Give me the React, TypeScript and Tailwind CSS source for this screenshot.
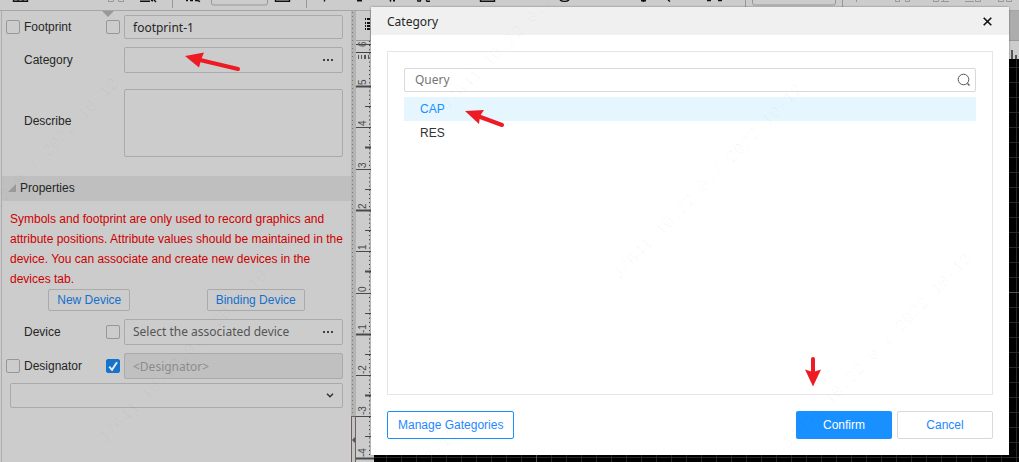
import { useState } from 'react';

const SANS = "font-['Liberation_Sans',Arial,sans-serif]";
const HUMANIST = "font-['Noto_Sans',sans-serif]";

const rulerMarks = [5, 4, 3, 2, 1, 0, -1, -2, -3, -4];
const categories = ['CAP', 'RES'];

const watermarks = [
  [-65, 275],
  [105, 445],
  [275, 625],
  [447, 112],
  [619, 281],
  [788, 450],
];

const Check = ({
  id,
  label,
  checked = false,
}: {
  id: string;
  label: string;
  checked?: boolean;
}) => {
  const [on, setOn] = useState(checked);
  return (
    <span className="relative block size-3.5 shrink-0">
      <input
        id={id}
        type="checkbox"
        aria-label={label}
        checked={on}
        onChange={(e) => setOn(e.target.checked)}
        className="block size-3.5 appearance-none rounded-xs border border-[#979797] checked:border-[#1474cc] checked:bg-[#1474cc]"
      />
      {on && (
        <svg
          viewBox="0 0 14 14"
          className="pointer-events-none absolute inset-0 size-3.5"
          fill="none"
          stroke="#e6e6e6"
          strokeWidth="2"
        >
          <path d="M3.2 7.6 6 10.8 11 3.2" />
        </svg>
      )}
    </span>
  );
};

const MoreButton = ({ label }: { label: string }) => (
  <button type="button" aria-label={label} className="flex h-full w-7 items-center justify-center">
    <svg width="10" height="2" viewBox="0 0 10 2" fill="#3c4048">
      <path d="M0 0h2v2H0zM4 0h2v2H4zM8 0h2v2H8z" />
    </svg>
  </button>
);

const Toolbar = () => (
  <div className="h-[11px] shrink-0 overflow-hidden border-b border-[#a6a6a6] bg-[#cccccc]">
    <svg width="1019" height="10" viewBox="0 0 1019 10" fill="none">
      <g stroke="#111" strokeWidth="1.4">
        <path d="M13.5 0v1.2h14V0M18 0v1M23 0v1" />
        <path d="M140 1.2h10M151 0l2 1M154 0l2 2" />
        <path d="M186 .6h2M190 .6h3M195 .6h3l2 1" />
        <path d="M275.5 0v1.2h14V0M480.5 0v1.2h14V0" />
        <path d="M324.5 0v1.5M357 .8h5M390 0l1 1.5M395 .7h-2M417 .8l3 .4 1-1M426 .3l1 1h3" />
        <path d="M560 0c2 1.8 7 1.8 9 0M641 .8h5M643.500 0v2M668 0l2 1.500M707 .6h4M718 .6h4" />
      </g>
      <g stroke="#979797">
        <path d="M108.500 0v1.500h5V0M118.500 0v1.500h5V0" />
        <path d="M211.500 0v3q0 2 2 2h52q2 0 2-2V0M752.500 0v3q0 2 2 2h79q2 0 2-2V0" />
        <path d="M172.500 0v8M306.500 0v8M745.500 0v7M842.500 0v7" />
        <path d="M856.500 0v2M895.500 0v1.500h4V0M905.500 0v1.500h4V0" />
        <path d="M933.500 0v1.500h5V0M941 1.500h8M943.500 0v1.500M965 1.500h9M975.500 0v1.500h5V0" />
        <path d="M998.500 0v1.500h5V0M1006.500 0v1.500h5V0" />
      </g>
    </svg>
  </div>
);

const VerticalRuler = () => (
  <svg width="18" className="block shrink-0 bg-[#cccccc]">
    <path d="M13.500 0V500" stroke="#333" strokeDasharray="1 3.130" />
    <path d="M0 3.500h18M0 11.500h18" stroke="#444" />
    <path d="M2 16h1M5 16h1M8 16h2M12 16h1" stroke="#555" strokeWidth="4" />
    <text
      transform="translate(10 6) rotate(-90)"
      fontSize="10"
      fill="#555"
      className={SANS}
    >
      6
    </text>
    {rulerMarks.map((mark, idx) => {
      const y = Math.round(45 + idx * 41.3);
      return (
        <g key={mark} stroke="#4a4a4a">
          <path d={`M0 ${y + 0.5}h18`} strokeWidth={idx % 3 === 0 ? 2 : 1} />
          <path
            d={`M9 ${y + 20.5}h9`}
            strokeWidth={idx % 3 === 1 ? 2 : 1}
          />
          <text
            transform={`translate(10 ${y - 1}) rotate(-90)`}
            fontSize="10"
            fill="#4a4a4a"
            stroke="none"
            className={SANS}
          >
            {mark}
          </text>
        </g>
      );
    })}
  </svg>
);

const Splitter = () => (
  <div className="flex w-[5px] shrink-0 flex-col bg-[#b3b3b3]">
    <svg width="5" className="block grow">
      <path d="M1.500 1V500" stroke="#777" strokeDasharray="1 3" />
    </svg>
    <button
      type="button"
      aria-label="Collapse panel"
      className="flex h-[46px] items-center justify-end border-x border-t border-[#6a6060] bg-[#c4c4c4]"
    >
      <svg width="3" height="6" viewBox="0 0 3 6" fill="#5c5252">
        <path d="M3 0v6L0 3z" />
      </svg>
    </button>
  </div>
);

const Workspace = () => (
  <div className="flex min-w-0 flex-1 flex-col">
    <div className="flex h-[30px] border-b border-[#999] bg-[#adadad]">
      <div className="w-[14px] bg-[#cccccc]">
        <svg width="14" height="29" viewBox="0 0 14 29">
          <path d="M9 8h1M9 12h1M9 15h1M9 18h1M11 8h3M11 12h3M11 15h3M11 18h3" stroke="#111" strokeWidth="2" />
        </svg>
      </div>
    </div>
    <div className="flex flex-1">
      <VerticalRuler />
      <div className="flex min-w-0 flex-1 flex-col">
        <div className="flex h-[18px] items-end justify-end gap-0.5 bg-[#cccccc] pr-0.5">
          <span className="h-[9px] w-0.5 bg-[#555]" />
          <span className="h-1 w-0.5 bg-[#555]" />
        </div>
        <svg className="block w-full flex-1 bg-black">
          <defs>
            <pattern id="grid" x="12" y="8" width="15" height="15" patternUnits="userSpaceOnUse">
              <path d="M.5 0v15M0 .5h15" stroke="#292929" />
            </pattern>
          </defs>
          <rect width="100%" height="100%" fill="url(#grid)" />
          <path d="M162.500 0v500M0 233.500h2000" stroke="#555" />
        </svg>
      </div>
    </div>
  </div>
);

const PropertyPanel = () => {
  const [footprint, setFootprint] = useState('footprint-1');
  const field = 'rounded-xs border border-[#aaaaaa]';

  return (
    <div className="flex w-[351px] shrink-0 bg-[#cccccc]">
      <div className="w-0.5 shrink-0 border-r border-[#adadad]" />
      <form className={`relative min-w-0 flex-1 pt-1 text-xs text-[#262626] ${SANS}`}>
        <svg width="12" height="6" viewBox="0 0 12 6" className="absolute top-0 left-[100px]">
          <path d="M0 0h12L6 6z" fill="#999" />
        </svg>

        <div className="flex h-6 items-center gap-1 pr-2 pl-1">
          <Check id="show-footprint" label="Show footprint" />
          <label htmlFor="footprint" className="w-[78px]">
            Footprint
          </label>
          <Check id="footprint-name" label="Show footprint name" />
          <input
            id="footprint"
            type="text"
            value={footprint}
            onChange={(e) => setFootprint(e.target.value)}
            className={`h-6 min-w-0 flex-1 px-2 ${HUMANIST} ${field}`}
          />
        </div>

        <div className="mt-2 flex items-center pr-2 pl-[22px]">
          <label htmlFor="category" className="w-[100px]">
            Category
          </label>
          <div className={`flex h-[26px] min-w-0 flex-1 ${field}`}>
            <input id="category" type="text" className="min-w-0 flex-1 px-2 outline-none" />
            <MoreButton label="Choose category" />
          </div>
        </div>

        <div className="mt-4 flex items-center pr-2 pl-[22px]">
          <label htmlFor="describe" className="w-[100px] pb-1">
            Describe
          </label>
          <textarea id="describe" className={`block h-[68px] min-w-0 flex-1 resize-none ${field}`} />
        </div>

        <h2 className="mt-[19px] flex h-[25px] items-center gap-1 bg-[#bfbfbf] pb-px pl-1.5">
          <svg width="8" height="8" viewBox="0 0 8 8">
            <path d="M8 0v8H0z" fill="#999" />
          </svg>
          Properties
        </h2>

        <p className="pt-2 pl-2 leading-5 text-[#cc0000]">
          Symbols and footprint are only used to record graphics and attribute
          positions. Attribute values should be maintained in the device. You
          can associate and create new devices in the devices tab.
        </p>
        <div className="flex justify-around px-2 text-[#1470cc]">
          <button type="button" className={`h-[22px] px-2 ${field}`}>
            New Device
          </button>
          <button type="button" className={`h-[22px] px-2 ${field}`}>
            Binding Device
          </button>
        </div>

        <div className="mt-2 flex items-center gap-1 pr-2 pl-[22px]">
          <label htmlFor="device" className="w-[78px]">
            Device
          </label>
          <Check id="show-device" label="Show device" />
          <div className={`flex h-[26px] min-w-0 flex-1 ${field}`}>
            <input
              id="device"
              type="text"
              placeholder="Select the associated device"
              className={`min-w-0 flex-1 pl-2 outline-none placeholder:text-[#555] ${HUMANIST}`}
            />
            <MoreButton label="Choose device" />
          </div>
        </div>

        <div className="mt-2 flex items-center gap-1 pr-2 pl-1">
          <Check id="show-designator" label="Show designator" />
          <label htmlFor="designator" className="w-[78px]">
            Designator
          </label>
          <Check id="designator-value" label="Show designator value" checked />
          <input
            id="designator"
            type="text"
            disabled
            placeholder="<Designator>"
            className={`h-[26px] min-w-0 flex-1 bg-[#c0c0c0] px-2 placeholder:text-[#8c8c8c] ${HUMANIST} ${field}`}
          />
        </div>

        <div className="relative mt-1 px-2">
          <select aria-label="Attribute" className={`block h-[25px] w-full appearance-none px-2 ${field}`}>
            <option></option>
          </select>
          <svg
            width="8"
            height="5"
            viewBox="0 0 8 5"
            fill="none"
            stroke="#333"
            strokeWidth="1.5"
            className="pointer-events-none absolute top-2.5 right-[17px]"
          >
            <path d="M1 .8 4 3.8 7 .8" />
          </svg>
        </div>
      </form>
    </div>
  );
};

const CategoryDialog = () => {
  const [selected, setSelected] = useState('CAP');

  return (
    <div
      role="dialog"
      aria-label="Category"
      className="absolute top-[7px] right-2.5 bottom-[7px] left-[371px] flex flex-col bg-white text-xs shadow-[0_0_2px_rgba(0,0,0,0.4)]"
    >
      <div className="flex h-7 shrink-0 items-center justify-between bg-[#f0f0f0] pr-[15px] pl-4">
        <h1 className={`pt-0.5 text-[#262626] ${HUMANIST}`}>Category</h1>
        <button type="button" aria-label="Close" className="p-0.5">
          <svg width="9" height="9" viewBox="0 0 9 9" stroke="#111" strokeWidth="1.6">
            <path d="M.7.7l7.600 7.600M8.300.7.7 8.300" />
          </svg>
        </button>
      </div>

      <div className="flex min-h-0 flex-1 flex-col p-4">
        <div className="flex-1 border border-[#e6e6e6] p-4">
          <div className="flex h-6 items-center rounded-xs border border-[#d9d9d9] pr-1">
            <input
              type="text"
              aria-label="Query"
              placeholder="Query"
              className={`min-w-0 flex-1 pl-2.5 outline-none placeholder:text-[#757575] ${HUMANIST}`}
            />
            <button type="button" aria-label="Search">
              <svg width="14" height="14" viewBox="0 0 14 14" fill="none" stroke="#555">
                <circle cx="6.500" cy="6.500" r="5.300" />
                <path d="M10.500 10.500l2 2" strokeWidth="1.300" />
              </svg>
            </button>
          </div>
          <ul className="mt-[5px]">
            {categories.map((category) => (
              <li key={category}>
                <button
                  type="button"
                  onClick={() => setSelected(category)}
                  className={`block h-6 w-full px-4 text-left ${SANS} ${
                    selected === category
                      ? 'bg-[#e5f6ff] text-[#1890ff]'
                      : 'text-[#333]'
                  }`}
                >
                  {category}
                </button>
              </li>
            ))}
          </ul>
        </div>

        <div className={`mt-4 flex gap-[5px] ${SANS}`}>
          <button
            type="button"
            className="mr-auto h-7 rounded-xs border border-[#1890ff] px-2.5 text-[#1e88ff]"
          >
            Manage Gategories
          </button>
          <button type="button" className="h-7 w-24 rounded-xs bg-[#1890ff] text-white">
            Confirm
          </button>
          <button
            type="button"
            className="h-7 w-24 rounded-xs border border-[#d9d9d9] text-[#1e88ff]"
          >
            Cancel
          </button>
        </div>
      </div>
    </div>
  );
};

const Annotations = () => (
  <svg className="pointer-events-none absolute inset-0 size-full">
    <g fill="#000" fillOpacity="0.03" fontSize="17" className="font-['Liberation_Mono',monospace]">
      {watermarks.map(([x, y]) => (
        <text key={x} transform={`translate(${x} ${y}) rotate(-46)`}>
          J7641 10.22.0.7 2022-10-12
        </text>
      ))}
    </g>
    <g fill="#ed1c24" stroke="#ed1c24" strokeLinecap="round">
      <path d="M185 56l19-3.500-2.500 6L199 67.500z" stroke="none" />
      <path d="M200 60l38 9" strokeWidth="4" />
      <path d="M465 111l19-1-4 6-1 8z" stroke="none" />
      <path d="M479 116.500l23 8.500" strokeWidth="4" />
      <path d="M813 386.500l-8-17 8 2.500 8-2.500z" stroke="none" />
      <path d="M813 372v-13" strokeWidth="4" />
    </g>
  </svg>
);

export default function App() {
  return (
    <div className="relative flex min-h-screen flex-col overflow-hidden bg-[#cccccc]">
      <Toolbar />
      <div className="flex flex-1">
        <PropertyPanel />
        <Splitter />
        <Workspace />
      </div>
      <CategoryDialog />
      <Annotations />
    </div>
  );
}
